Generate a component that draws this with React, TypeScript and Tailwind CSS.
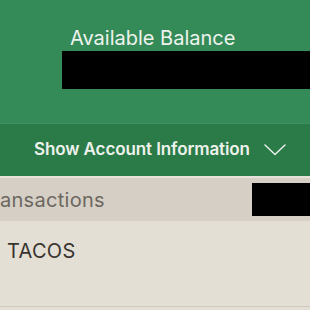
import React from 'react'

function Chevron() {
  return (
    <svg width="22" height="12" viewBox="0 0 22 12" fill="none" className="shrink-0">
      <path d="M1 1 L11 10.5 L21 1" stroke="#e8efe9" strokeWidth="1.5" strokeLinecap="round" strokeLinejoin="round" />
    </svg>
  )
}

export default function App() {
  return (
    <div className="w-[310px] h-[310px] overflow-hidden flex flex-col font-['Inter',sans-serif]">
      {/* balance */}
      <div className="h-[123px] bg-[#348b58] flex flex-col pl-[62px] pt-[27px]">
        <div className="pl-[8px] text-[20px] leading-[23px] text-[#eef3ee]">Available Balance</div>
        <div className="mt-[1px] h-[38px] bg-black" />
      </div>

      {/* account info toggle */}
      <div className="h-[53px] bg-[#2b7b49] border-t border-[#3c9062] flex items-center pl-[34px] gap-[14px]">
        <span className="text-[17px] font-semibold text-[#eef2ec] tracking-[-0.1px]">Show Account Information</span>
        <Chevron />
      </div>

      {/* transactions header */}
      <div className="h-[45px] bg-[#d5cfc5] border-t-[2px] border-[#e6e2da] flex items-center justify-between">
        <span className="-ml-[20px] text-[20px] text-[#6c675f] tracking-[0.3px]">Transactions</span>
        <div className="w-[58px] h-[33px] bg-black" />
      </div>

      {/* rows */}
      <div className="flex-1 bg-[#e4dfd5] flex flex-col">
        <div className="h-[86px] pl-[7px] pt-[15px] text-[20px] text-[#38342f] tracking-[0.3px] border-b border-[#cfc9bf]">TACOS</div>
      </div>
    </div>
  )
}
